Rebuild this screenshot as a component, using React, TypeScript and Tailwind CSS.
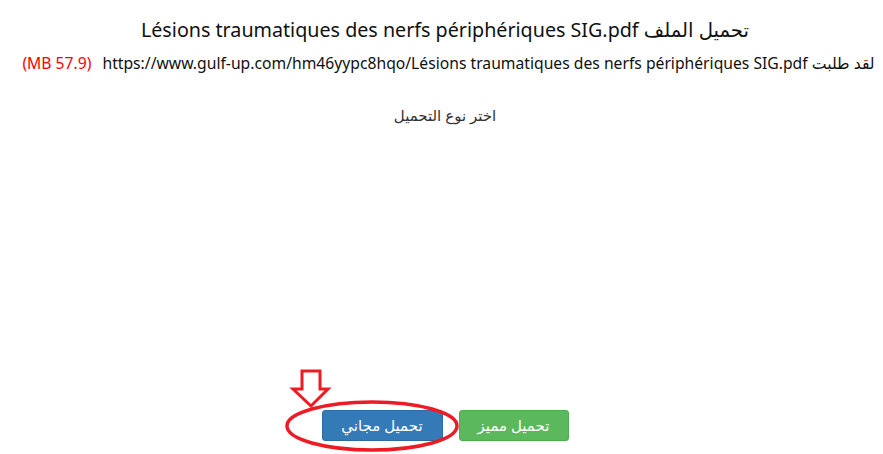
import React from 'react';

const font = { fontFamily: '"Noto Sans", "DejaVu Sans", sans-serif' };

function Annotation() {
    return (
        <svg className="absolute left-[282px] top-[368px] pointer-events-none" width="180" height="86" viewBox="0 0 180 86">
            {/* outline arrow pointing down */}
            <path d="M20 3 H38 V21 H46 L29 38 L11 21 H20 Z" fill="none" stroke="#ed1c24" strokeWidth="3" strokeLinejoin="miter" />
            {/* ellipse round the free button */}
            <ellipse cx="90" cy="58" rx="85" ry="24" fill="none" stroke="#ed1c24" strokeWidth="3.5" />
        </svg>
    );
}

export default function App() {
    return (
        <div className="relative min-h-screen bg-white pl-[7px] text-center text-[#111]" style={font}>
            <h1 dir="rtl" className="pt-[15px] text-[19.7px] leading-[30px]">
                تحميل الملف Lésions traumatiques des nerfs périphériques SIG.pdf
            </h1>
            <p dir="ltr" className="mt-[7px] pl-[7px] text-[15.7px] leading-[22px]">
                <span className="text-[#ff0000] mr-[11px]">(MB 57.9)</span>
                https://www.gulf-up.com/hm46yypc8hqo/Lésions traumatiques des nerfs périphériques SIG.pdf <span dir="rtl">لقد طلبت</span>
            </p>
            <p dir="rtl" className="mt-[30px] text-[15px] leading-[22px] text-[#333]">اختر نوع التحميل</p>
            <div className="h-[284px]" />
            <div dir="rtl" className="flex justify-center gap-[16px]">
                <button className="h-[31px] w-[110px] rounded-[3px] border border-[#4cae4c] bg-[#5cb85c] text-[15px] text-white">
                    تحميل مميز
                </button>
                <button className="h-[31px] w-[121px] rounded-[3px] border border-[#2e6da4] bg-[#337ab7] text-[15px] text-white">
                    تحميل مجاني
                </button>
            </div>
            <Annotation />
        </div>
    );
}
